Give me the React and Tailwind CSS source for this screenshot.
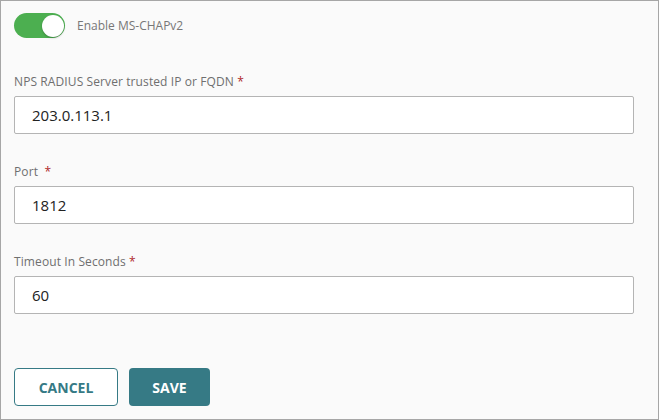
function Field({ label, value, gap }) {
  return (
    <div className="flex flex-col">
      <label className="text-[12px] text-[#6f6f6f] leading-[16px] tracking-[0.1px]">
        {label}
        {gap ? "  " : " "}
        <span className="text-[#b0282a] whitespace-pre">{gap ? " *" : "*"}</span>
      </label>
      <div className="mt-[6px] h-[38px] w-[620px] border border-[#b4b4b4] rounded-[2px] bg-white flex items-center pl-[17px] text-[15px] text-[#222]">
        {value}
      </div>
    </div>
  )
}

function App() {
  return (
    <div
      className="w-[659px] h-[420px] border border-[#a6a6a6] bg-[#fafafa] pl-[13px] flex flex-col"
      style={{ fontFamily: '"Open Sans", "Noto Sans", sans-serif' }}
    >
      <div className="flex items-center mt-[12px] h-[25px]">
        <div className="w-[51px] h-[25px] rounded-full bg-[#4caf50] flex items-center justify-end pr-[1px]">
          <div className="w-[22px] h-[22px] rounded-full bg-white shadow-[0_1px_2px_rgba(0,0,0,0.25)]" />
        </div>
        <span className="ml-[12px] text-[12px] text-[#777]">Enable MS-CHAPv2</span>
      </div>

      <div className="mt-[36px] flex flex-col gap-[30px]">
        <Field label="NPS RADIUS Server trusted IP or FQDN" value="203.0.113.1" />
        <Field label="Port" value="1812" gap />
        <Field label="Timeout In Seconds" value="60" />
      </div>

      <div className="mt-[54px] flex gap-[11px]">
        <button className="w-[104px] h-[38px] border border-[#367a85] rounded-[4px] bg-white text-[#367a85] font-bold text-[14px]">
          CANCEL
        </button>
        <button className="w-[81px] h-[38px] rounded-[4px] bg-[#367a85] text-white font-bold text-[14px]">
          SAVE
        </button>
      </div>
    </div>
  )
}

export default App
